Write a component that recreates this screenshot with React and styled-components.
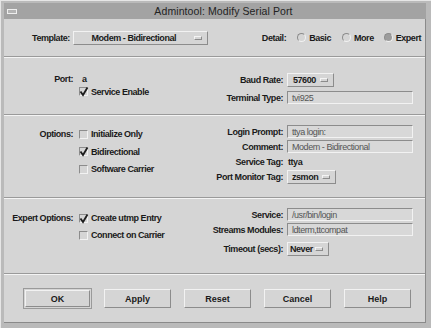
import React from "react";
import styled, { createGlobalStyle } from "styled-components";

const Global = createGlobalStyle`
  body {
    margin: 0;
    background: #ffffff;
  }
  * {
    box-sizing: border-box;
  }
`;

const Frame = styled.div`
  width: 431px;
  height: 328px;
  background: #bababa;
  padding: 2px 5px 5px 3px;
  display: flex;
  flex-direction: column;
  font-family: "Liberation Sans", Arial, sans-serif;
  font-size: 9px;
  letter-spacing: -0.45px;
  color: #1a1a1a;
  border-left: 1px solid #e6e6e6;
  border-top: 1px solid #e6e6e6;
`;

const TitleBar = styled.div`
  height: 16px;
  background: #a3a3a3;
  display: flex;
  align-items: center;
  flex: none;
`;

const WinButton = styled.span`
  width: 10px;
  height: 5px;
  margin: 0 4px 0 3px;
  border: 1px solid #eeeeee;
  background: #b4b4b4;
`;

const Title = styled.div`
  flex: 1;
  text-align: center;
  font-size: 10.5px;
  letter-spacing: 0.1px;
  color: #222;
`;

const Body = styled.div`
  flex: 1;
  background: #d5d5d5;
  display: flex;
  flex-direction: column;
  border-right: 1px solid #8a8a8a;
  border-bottom: 1px solid #8a8a8a;
`;

const TopRow = styled.div`
  height: 37px;
  display: flex;
  align-items: center;
  padding: 0 4px 0 28px;
  flex: none;
`;

const Label = styled.span`
  font-weight: bold;
  white-space: nowrap;
  width: ${(p) => (p.$w ? `${p.$w}px` : "auto")};
  flex: none;
  text-align: right;
  margin-right: ${(p) => p.$gap ?? 3}px;
`;

const Dropdown = styled.div`
  width: ${(p) => p.$w}px;
  height: 14px;
  display: flex;
  align-items: center;
  background: #d5d5d5;
  border: 1px solid;
  border-color: #f2f2f2 #8c8c8c #8c8c8c #f2f2f2;
  font-weight: bold;
  flex: none;
`;

const DropText = styled.span`
  flex: 1;
  text-align: ${(p) => (p.$pad != null ? "left" : "center")};
  padding-left: ${(p) => p.$pad ?? 0}px;
  white-space: nowrap;
`;

const DropMark = styled.span`
  width: 8px;
  height: 4px;
  margin-right: 5px;
  flex: none;
  border: 1px solid;
  border-color: #f4f4f4 #8c8c8c #8c8c8c #f4f4f4;
`;

const Detail = styled.div`
  margin-left: auto;
  display: flex;
  align-items: center;
`;

const RadioItem = styled.span`
  display: flex;
  align-items: center;
  gap: 3px;
  margin-left: ${(p) => p.$ml}px;
  font-weight: bold;
`;

const RadioDot = styled.span`
  width: 9px;
  height: 9px;
  border-radius: 50%;
  border: 1px solid;
  border-color: #8c8c8c #f2f2f2 #f2f2f2 #8c8c8c;
  background: ${(p) => (p.$on ? "#9c9c9c" : "#d5d5d5")};
`;

const Separator = styled.div`
  height: 2px;
  flex: none;
  border-top: 1px solid #9a9a9a;
  border-bottom: 1px solid #f4f4f4;
`;

const Section = styled.div`
  height: ${(p) => p.$h}px;
  flex: none;
  display: flex;
`;

const Block = styled.div`
  display: flex;
  flex-direction: column;
  gap: ${(p) => p.$gap}px;
  padding-top: ${(p) => p.$top}px;
  width: ${(p) => (p.$w ? `${p.$w}px` : "auto")};
  flex: ${(p) => (p.$w ? "none" : 1)};
`;

const Row = styled.div`
  display: flex;
  align-items: center;
  height: ${(p) => p.$h ?? 13}px;
  margin-top: ${(p) => p.$mt ?? 0}px;
`;

const Value = styled.span`
  font-weight: bold;
  padding-left: ${(p) => p.$pl ?? 0}px;
`;

const CheckItem = styled.span`
  display: flex;
  align-items: center;
  gap: 3px;
  font-weight: bold;
`;

const Box = styled.span`
  position: relative;
  width: 9px;
  height: 9px;
  border: 1px solid;
  border-color: #8c8c8c #f2f2f2 #f2f2f2 #8c8c8c;
  background: #d5d5d5;
  svg {
    position: absolute;
    left: -1px;
    top: -2px;
  }
`;

const Field = styled.div`
  width: 126px;
  height: 13px;
  border: 1px solid;
  border-color: #8c8c8c #f2f2f2 #f2f2f2 #8c8c8c;
  background: #d8d8d8;
  color: #555;
  padding-left: 4px;
  display: flex;
  align-items: center;
  white-space: nowrap;
`;

const ButtonBar = styled.div`
  flex: 1;
  display: flex;
  justify-content: space-between;
  align-items: flex-start;
  padding: 14px 14px 0 20px;
`;

const Button = styled.button`
  font: inherit;
  font-weight: bold;
  color: #1a1a1a;
  width: ${(p) => (p.$default ? 65 : 67)}px;
  height: ${(p) => (p.$default ? 17 : 19)}px;
  margin: ${(p) => (p.$default ? "1px" : "0")};
  background: #d5d5d5;
  border: 1px solid;
  border-color: #f2f2f2 #8c8c8c #8c8c8c #f2f2f2;
  outline: ${(p) => (p.$default ? "1px solid #9a9a9a" : "none")};
  outline-offset: 1px;
  padding: 0;
`;

function Check({ on, children }) {
  return (
    <CheckItem>
      <Box>
        {on && (
          <svg width="10" height="11" viewBox="0 0 10 11">
            <path d="M1.5 5.5 L4 9 L8.5 1.5" stroke="#1e1e1e" strokeWidth="1.8" fill="none" />
          </svg>
        )}
      </Box>
      {children}
    </CheckItem>
  );
}

function Choice({ w, children, pad }) {
  return (
    <Dropdown $w={w}>
      <DropText $pad={pad}>{children}</DropText>
      <DropMark />
    </Dropdown>
  );
}

export default function App() {
  return (
    <>
      <Global />
      <Frame>
        <TitleBar>
          <WinButton />
          <Title>Admintool: Modify Serial Port</Title>
        </TitleBar>
        <Body>
          <TopRow>
            <Label>Template:</Label>
            <Choice w={135}>Modem - Bidirectional</Choice>
            <Detail>
              <Label $gap={0}>Detail:</Label>
              <RadioItem $ml={11}>
                <RadioDot />
                Basic
              </RadioItem>
              <RadioItem $ml={11}>
                <RadioDot />
                More
              </RadioItem>
              <RadioItem $ml={10}>
                <RadioDot $on />
                Expert
              </RadioItem>
            </Detail>
          </TopRow>
          <Separator />

          <Section $h={56}>
            <Block $w={205} $top={14} $gap={0}>
              <Row>
                <Label $w={69} $gap={7}>Port:</Label>
                <Value $pl={2}>a</Value>
              </Row>
              <Row>
                <Label $w={69} $gap={6} />
                <Check on>Service Enable</Check>
              </Row>
            </Block>
            <Block $top={15} $gap={4}>
              <Row $h={14}>
                <Label $w={74} $gap={4}>Baud Rate:</Label>
                <Choice w={47} pad={5}>57600</Choice>
              </Row>
              <Row>
                <Label $w={74} $gap={4}>Terminal Type:</Label>
                <Field>tvi925</Field>
              </Row>
            </Block>
          </Section>
          <Separator />

          <Section $h={81}>
            <Block $w={205} $top={11} $gap={3.5}>
              <Row $h={14}>
                <Label $w={69} $gap={6}>Options:</Label>
                <Check>Initialize Only</Check>
              </Row>
              <Row $h={14}>
                <Label $w={69} $gap={6} />
                <Check on>Bidirectional</Check>
              </Row>
              <Row $h={14}>
                <Label $w={69} $gap={6} />
                <Check>Software Carrier</Check>
              </Row>
            </Block>
            <Block $top={9} $gap={2}>
              <Row>
                <Label $w={74} $gap={4}>Login Prompt:</Label>
                <Field>ttya login:</Field>
              </Row>
              <Row>
                <Label $w={74} $gap={4}>Comment:</Label>
                <Field>Modem - Bidirectional</Field>
              </Row>
              <Row>
                <Label $w={74} $gap={4}>Service Tag:</Label>
                <Value $pl={1}>ttya</Value>
              </Row>
              <Row $h={14}>
                <Label $w={74} $gap={4}>Port Monitor Tag:</Label>
                <Choice w={49} pad={4}>zsmon</Choice>
              </Row>
            </Block>
          </Section>
          <Separator />

          <Section $h={74}>
            <Block $w={205} $top={12} $gap={3}>
              <Row $h={14}>
                <Label $w={69} $gap={6}>Expert Options:</Label>
                <Check on>Create utmp Entry</Check>
              </Row>
              <Row $h={14}>
                <Label $w={69} $gap={6} />
                <Check>Connect on Carrier</Check>
              </Row>
            </Block>
            <Block $top={9} $gap={2}>
              <Row>
                <Label $w={74} $gap={4}>Service:</Label>
                <Field>/usr/bin/login</Field>
              </Row>
              <Row>
                <Label $w={74} $gap={4}>Streams Modules:</Label>
                <Field>ldterm,ttcompat</Field>
              </Row>
              <Row $h={14} $mt={4}>
                <Label $w={74} $gap={4}>Timeout (secs):</Label>
                <Choice w={42} pad={2}>Never</Choice>
              </Row>
            </Block>
          </Section>
          <Separator />

          <ButtonBar>
            <Button $default>OK</Button>
            <Button>Apply</Button>
            <Button>Reset</Button>
            <Button>Cancel</Button>
            <Button>Help</Button>
          </ButtonBar>
        </Body>
      </Frame>
    </>
  );
}
